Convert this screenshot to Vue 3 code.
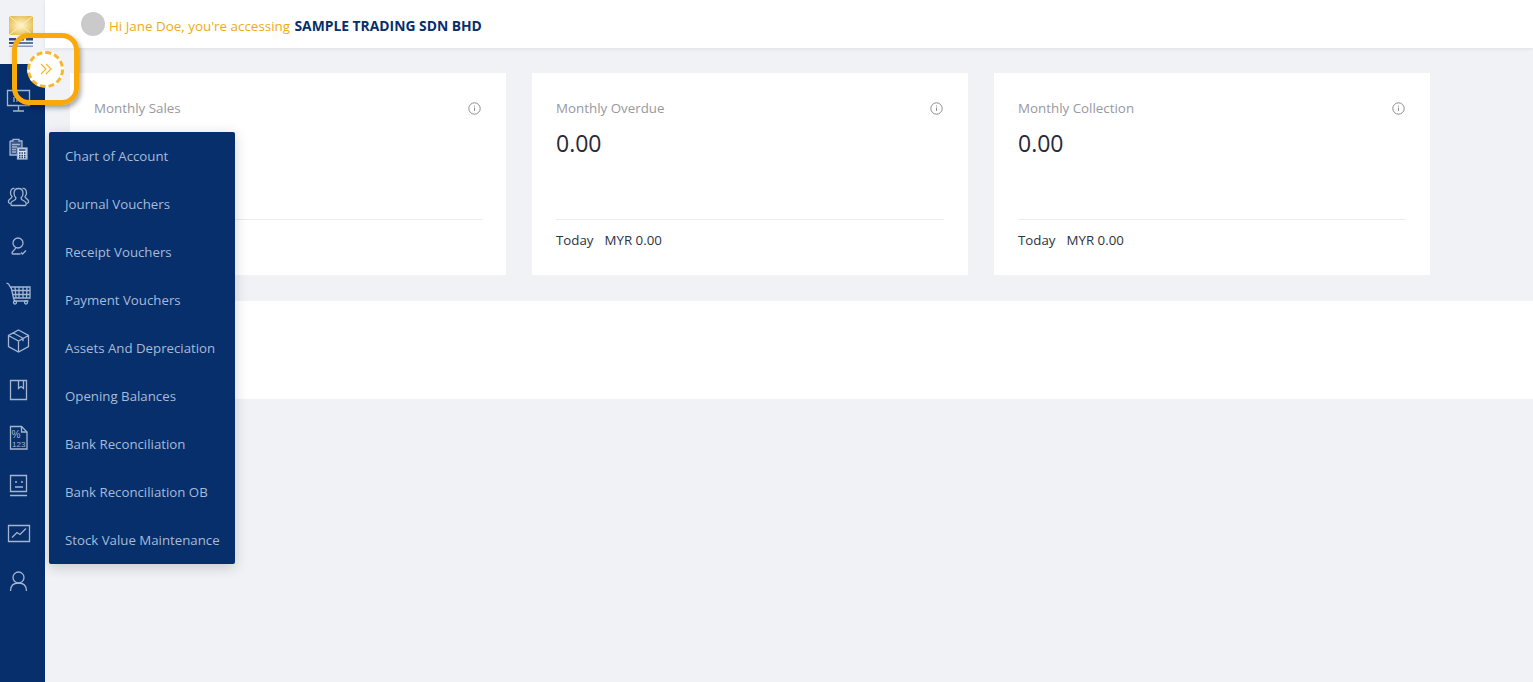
<script setup>
const cards = [
  { title: 'Monthly Sales', value: '0.00', today: 'MYR 0.00' },
  { title: 'Monthly Overdue', value: '0.00', today: 'MYR 0.00' },
  { title: 'Monthly Collection', value: '0.00', today: 'MYR 0.00' }
]
const menu = ['Chart of Account','Journal Vouchers','Receipt Vouchers','Payment Vouchers','Assets And Depreciation','Opening Balances','Bank Reconciliation','Bank Reconciliation OB','Stock Value Maintenance']
</script>

<template>
  <div class="page">
    <aside class="side">
      <div class="logo">
        <svg class="logo-svg" width="24" height="32" viewBox="0 0 24 32">
          <defs>
            <radialGradient id="gold" cx="50%" cy="50%" r="60%">
              <stop offset="0" stop-color="#fff8dc"/>
              <stop offset=".45" stop-color="#f6dd92"/>
              <stop offset="1" stop-color="#e2bd55"/>
            </radialGradient>
          </defs>
          <rect width="24" height="19" fill="url(#gold)"/>
          <path d="M0 0l12 9.500L24 0M0 19l12-9.500L24 19" fill="none" stroke="#fbeebc" stroke-width="1"/>
          <rect x="0" y="22" width="7" height="2.500" fill="#2c4a80"/>
          <rect x="9" y="22" width="6" height="2.500" fill="#2c4a80"/>
          <rect x="17" y="22" width="7" height="2.500" fill="#2c4a80"/>
          <rect x="0" y="26" width="7" height="2" fill="#2c4a80"/>
          <rect x="9" y="26" width="15" height="2" fill="#5d76a3"/>
          <rect x="0" y="29.500" width="24" height="1.500" fill="#8c9dbb"/>
        </svg>
      </div>
      <nav class="icons">
        <div class="ic"><svg width="24" height="24" viewBox="0 0 24 24"><path d="M1.500 2.500h22v15h-22zM12.500 17.500v5M7 23h11M8 14V9M11 14V7M14 14V9M17 14v-3"/></svg></div>
        <div class="ic"><svg width="24" height="24" viewBox="0 0 24 24"><path class="soft" d="M4 5h12v14H4z"/><path d="M4 5h3V3.500h6V5h3v7M11 19H4V5M6 8.500h8M6 11h5M6 13.500h4M6 16h4"/><rect class="solid" x="11.500" y="12" width="9.500" height="11"/><path class="dark" d="M13 14h6.500M13 17h1.500M15.500 17H17M18 17h1.500M13 19.500h1.500M15.500 19.500H17M18 19.500h1.500M13 21.500h1.500M15.500 21.500H17M18 21.500h1.500"/></svg></div>
        <div class="ic"><svg width="24" height="24" viewBox="0 0 24 24"><path d="M12.500 4.500c-3 0-4.500 2-4.500 5 0 2 1 3.500 2 4.500 0 2-2 2.500-4 3.500-1.500 1-1.500 4 0 4h13c1.500 0 1.500-3 0-4-2-1-4-1.500-4-3.500 1-1 2-2.500 2-4.500 0-3-1.500-5-4.500-5z"/><path d="M8.500 4.500C6 4 4.500 6 4.500 9c0 1.500.7 2.800 1.500 3.500 0 2-3 2.500-3.500 4.500-.3 1.200.3 2.500 2 2.500M16.500 4.500C19 4 20.500 6 20.500 9c0 1.500-.7 2.800-1.500 3.500 0 2 3 2.500 3.500 4.500.3 1.200-.3 2.500-2 2.500"/></svg></div>
        <div class="ic"><svg width="24" height="24" viewBox="0 0 24 24"><circle cx="12" cy="11" r="5"/><path d="M9.500 16c0 2-3 2.500-3.500 5 0 .7.500 1 1 1h7.500M15 20.500l1.500 1.500 3.500-3.500"/></svg></div>
        <div class="ic"><svg width="26" height="26" viewBox="0 0 26 26"><path d="M1.500 3l2 1 3 5M6 7h19v11H8.500zM10 7l1 11M14 7v11M18 7v11M22 7l-.5 11M7 10.500h18M7.500 14.500h17.500M8.500 18l1 3h14"/><circle cx="10" cy="22.500" r="1.500"/><circle cx="21" cy="22.500" r="1.500"/></svg></div>
        <div class="ic"><svg width="24" height="24" viewBox="0 0 24 24"><path d="M12.500 2l10 5.500v11l-10 5.500-10-5.500v-11zM2.500 7.500l10 5.500 10-5.500M12.500 13v11M7 4.800l10 5.500v3"/></svg></div>
        <div class="ic"><svg width="24" height="24" viewBox="0 0 24 24"><path d="M4.500 4.500h16v19h-16zM12.500 4.500v8l2.500-2 2.500 2v-8"/></svg></div>
        <div class="ic"><svg width="24" height="26" viewBox="0 0 24 26"><path d="M4.500 2.500h11l5.500 5.500v17H4.500z"/><path d="M15.500 2.500V8H21"/><text x="5.500" y="13.500" class="doc-a">%</text><text x="6" y="23" class="doc-b">123</text></svg></div>
        <div class="ic"><svg width="24" height="24" viewBox="0 0 24 24"><path d="M4.500 3.500h16v16h-16zM4 23.500h17M9 10h2M15 10h2M9 15h8"/></svg></div>
        <div class="ic"><svg width="24" height="24" viewBox="0 0 24 24"><path d="M2.500 5.500h21v16h-21zM6 17.500l5-5 3 2 6-6"/></svg></div>
        <div class="ic"><svg width="24" height="24" viewBox="0 0 24 24"><circle cx="12.500" cy="9.500" r="5.500"/><path d="M4.500 23c0-5.500 3.500-8 8-8s8 2.500 8 8"/></svg></div>
      </nav>
    </aside>

    <div class="main">
      <header class="top">
        <span class="avatar"></span>
        <span class="greet">Hi Jane Doe, you're accessing </span>
        <strong class="org">SAMPLE TRADING SDN BHD</strong>
      </header>
      <section class="content">
        <div class="cards">
          <article v-for="c in cards" :key="c.title" class="card">
            <div class="card-head">
              <span class="card-title">{{ c.title }}</span>
              <svg class="info" width="13" height="13" viewBox="0 0 13 13"><circle cx="6.500" cy="6.500" r="5.700"/><path d="M6.500 5.500v3.400M6.500 3.600v.9"/></svg>
            </div>
            <div class="card-value">{{ c.value }}</div>
            <div class="card-foot"><span>Today</span><span>{{ c.today }}</span></div>
          </article>
        </div>
        <div class="panel"></div>
      </section>
    </div>

    <ul class="menu">
      <li v-for="m in menu" :key="m">{{ m }}</li>
    </ul>

    <div class="spot">
      <div class="spot-btn">
        <svg width="14" height="14" viewBox="0 0 14 14"><path d="M2 2l5 5-5 5M7 2l5 5-5 5"/></svg>
      </div>
    </div>
  </div>
</template>

<style>
html, body { margin: 0; background: #f0f2f5; }
</style>

<style scoped>
.page { position: relative; display: flex; height: 682px; overflow: hidden; font-family: "Open Sans", "Noto Sans", sans-serif; background: #f0f2f5; }
.side { width: 45px; flex: none; display: flex; flex-direction: column; background: #f0f2f5; }
.logo { height: 64px; box-sizing: border-box; padding: 16px 0 0 9px; }
.logo-svg { display: block; }
.icons { flex: 1; background: #062f6c; padding: 24px 9px 0 0; display: flex; flex-direction: column; }
.ic { height: 48px; display: flex; align-items: flex-start; justify-content: center; }
.ic svg { fill: none; stroke: #a5b5d0; stroke-width: 1.300; overflow: visible; }
.ic svg .solid { fill: #dfe6f0; stroke: #a5b5d0; }
.ic svg .soft { fill: #a5b5d0; fill-opacity: .3; stroke: none; }
.ic svg .dark { stroke: #1d4279; stroke-width: 1.300; }
.ic svg text { fill: #a5b5d0; stroke: none; font-family: "Liberation Sans", sans-serif; }
.ic svg .doc-a { font-size: 10px; }
.ic svg .doc-b { font-size: 8px; }
.main { flex: 1; min-width: 0; }
.top { height: 48px; background: #fff; box-shadow: 0 1px 4px rgba(0, 0, 0, .08); display: flex; align-items: center; padding-left: 36px; position: relative; }
.avatar { width: 24px; height: 24px; border-radius: 50%; background: #cacaca; margin-right: 4px; }
.greet { color: #f0ab12; white-space: pre; font-size: 13.400px; padding-top: 3px; margin-right: 1px; }
.org { color: #062f6c; font-weight: 700; font-size: 13.850px; padding-top: 3px; }
.content { padding: 25px 0 0 25px; }
.cards { display: flex; gap: 26px; }
.card { width: 436px; height: 202px; box-sizing: border-box; background: #fff; padding: 24px 24px 0; display: flex; flex-direction: column; }
.card-head { display: flex; justify-content: space-between; align-items: center; height: 22px; padding-right: 1px; }
.card-title { font-size: 13.350px; color: #98989f; }
.info { fill: none; stroke: #8c8c8c; stroke-width: 1; }
.card-value { font-size: 23px; color: #262b36; line-height: 32px; margin-top: 8px; }
.card-foot { margin-top: 60px; border-top: 1px solid #ececec; height: 39px; display: flex; gap: 11px; align-items: center; font-size: 13.300px; color: #2d3340; }
.panel { height: 98px; margin-top: 26px; background: #fff; }
.menu { position: absolute; left: 49px; top: 132px; width: 186px; margin: 0; padding: 0; list-style: none; background: #062f6c; border-radius: 2px; box-shadow: 0 3px 14px rgba(0, 0, 0, .18); }
.menu li { height: 48px; line-height: 48px; padding-left: 16px; font-size: 13.250px; color: #a9bad6; white-space: nowrap; }
.spot { position: absolute; left: 12px; top: 33px; width: 67px; height: 72px; box-sizing: border-box; border: 5px solid #f9a90a; border-radius: 17px; box-shadow: 2px 3px 5px rgba(0, 0, 0, .35); display: flex; align-items: center; justify-content: center; }
.spot-btn { width: 37px; height: 37px; box-sizing: border-box; border: 3px dashed #f9b62a; border-radius: 50%; background: #fff; display: flex; align-items: center; justify-content: center; }
.spot-btn svg { fill: none; stroke: #f9b62a; stroke-width: 1.200; }
</style>
